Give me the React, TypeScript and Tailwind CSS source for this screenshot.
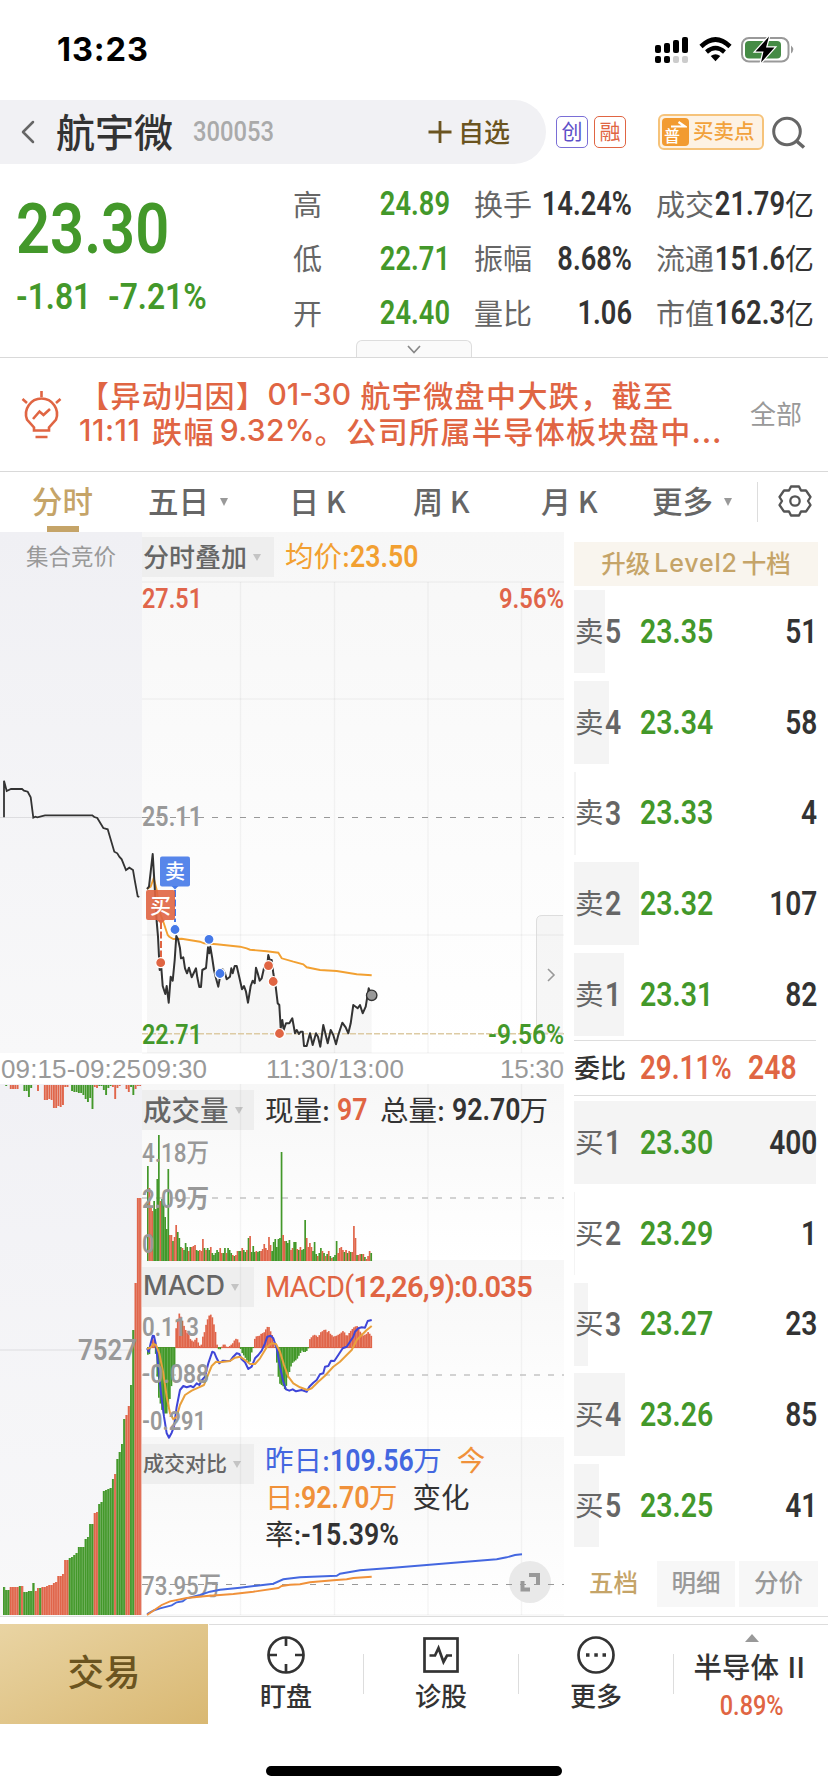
import React from 'react';
import { ChevronLeft } from 'lucide-react';

type Point = [number, number];

// Chart coordinates are stored at three units per pixel
const U = 3;

const auctionLine: Point[] = [
  [12, 232], [12, 122], [20, 153], [33, 147], [66, 147], [72, 152], [83, 155], [92, 172], [100, 233], [106, 230],
  [112, 232], [135, 226], [277, 226], [283, 231], [292, 234], [310, 264], [323, 268], [343, 335], [352, 340],
  [358, 350], [365, 358], [378, 390], [388, 383], [399, 390], [404, 420], [413, 469], [418, 471],
];

const priceLine: Point[] = [
  [441, 447], [447, 440], [458, 342], [463, 420], [470, 545], [474, 590], [479, 690], [484, 683], [488, 738],
  [496, 762], [500, 738], [506, 788], [512, 710], [518, 722], [524, 660], [529, 588], [534, 598], [540, 625],
  [543, 655], [550, 652], [555, 685], [561, 700], [567, 683], [575, 712], [588, 685], [592, 712], [598, 741],
  [603, 741], [607, 690], [618, 684], [624, 622], [628, 640], [631, 620], [636, 650], [642, 690], [648, 715],
  [655, 740], [661, 705], [668, 688], [675, 700], [680, 718], [690, 710], [694, 685], [698, 700], [704, 678],
  [710, 678], [718, 712], [726, 748], [732, 738], [738, 755], [744, 788], [752, 738], [758, 722], [764, 730],
  [768, 683], [773, 700], [779, 722], [785, 715], [793, 680], [800, 690], [805, 645], [810, 662], [815, 660],
  [820, 700], [827, 740], [833, 790], [838, 795], [842, 865], [847, 840], [851, 870], [858, 850], [868, 850],
  [877, 835], [885, 880], [890, 870], [897, 882], [902, 875], [908, 875], [912, 918], [920, 918], [930, 880],
  [938, 915], [948, 880], [954, 890], [961, 920], [970, 855], [976, 880], [983, 910], [992, 870], [1000, 885],
  [1008, 913], [1015, 885], [1027, 848], [1037, 862], [1045, 880], [1052, 850], [1060, 795], [1067, 800],
  [1073, 805], [1080, 795], [1088, 820], [1097, 800], [1106, 745], [1115, 765],
];

const averageLine: Point[] = [
  [441, 447], [452, 440], [461, 415], [470, 450], [480, 520], [490, 545], [503, 585], [508, 590], [520, 597],
  [545, 596], [600, 605], [612, 610], [650, 613], [720, 620], [740, 625], [750, 629], [800, 634], [835, 638],
  [845, 655], [880, 665], [910, 673], [920, 682], [960, 690], [1010, 693], [1070, 703], [1115, 706],
];

const difLine: Point[] = [
  [441, 55], [446, 65], [452, 40], [458, 17], [462, 18], [468, 45], [475, 110], [483, 190], [492, 260], [500, 310],
  [507, 323], [515, 308], [522, 290], [530, 230], [540, 180], [550, 168], [560, 172], [572, 168], [580, 172],
  [590, 160], [598, 165], [606, 150], [615, 140], [625, 100], [637, 65], [643, 68], [650, 85], [658, 100],
  [668, 92], [680, 93], [690, 93], [700, 80], [710, 70], [718, 72], [725, 88], [735, 97], [745, 117], [755, 110],
  [765, 85], [775, 75], [785, 62], [795, 40], [802, 20], [812, 17], [820, 25], [830, 55], [840, 110], [850, 155],
  [858, 178], [868, 182], [878, 178], [888, 184], [905, 180], [920, 185], [928, 170], [940, 158], [950, 150],
  [960, 133], [970, 130], [975, 110], [985, 108], [993, 92], [1003, 93], [1015, 75], [1028, 55], [1040, 50],
  [1050, 35], [1060, 20], [1065, 5], [1075, -5], [1085, -8], [1095, -7], [1103, -27], [1115, -30],
];

const deaLine: Point[] = [
  [441, 57], [452, 52], [460, 42], [468, 45], [478, 70], [490, 130], [500, 200], [510, 250], [520, 268], [530, 260],
  [540, 225], [555, 195], [575, 182], [595, 173], [612, 165], [622, 140], [635, 108], [648, 95], [660, 97],
  [690, 93], [705, 83], [720, 80], [735, 90], [750, 102], [765, 102], [780, 85], [800, 52], [815, 40], [828, 42],
  [840, 65], [852, 105], [865, 140], [880, 160], [900, 172], [922, 180], [935, 175], [955, 155], [975, 137],
  [1000, 110], [1020, 95], [1040, 75], [1055, 60], [1070, 30], [1085, 15], [1100, 0], [1115, -12],
];

const yesterdayLine: Point[] = [
  [441, 852], [460, 842], [480, 835], [515, 826], [530, 817], [548, 814], [560, 805], [600, 795], [630, 785],
  [660, 779], [720, 773], [770, 767], [820, 761], [850, 748], [900, 742], [1010, 737], [1020, 731], [1080, 721],
  [1180, 713], [1280, 705], [1380, 697], [1490, 688], [1520, 682], [1545, 675], [1566, 673],
];

const todayLine: Point[] = [
  [441, 855], [460, 842], [485, 825], [510, 814], [560, 804], [620, 798], [700, 792], [760, 785], [835, 774],
  [845, 768], [870, 764], [900, 763], [930, 757], [1000, 751], [1040, 748], [1060, 744], [1115, 740],
];

// MACD histogram, [x, signed height in px]
const macdBars: Point[] = [
  [441, -6], [446, -9], [451, -2], [455, 8], [460, 12], [465, 1], [470, -22], [475, -49], [480, -55], [485, -62],
  [490, -66], [500, -66], [505, -58], [510, -50], [515, -35], [520, -28], [526, -12], [528, 20], [533, 27],
  [538, 35], [543, 30], [548, 26], [553, 20], [560, 15], [566, 14], [571, 8], [580, 6], [590, 10], [595, 4],
  [602, 0], [607, 10], [612, 14], [617, 22], [622, 28], [627, 32], [632, 33], [637, 30], [642, 22], [647, 14],
  [651, 2], [657, -3], [662, -1], [668, 3], [675, 3], [681, 0], [690, 2], [700, 5], [705, 9], [715, 8], [720, 0],
  [725, -5], [735, -10], [745, -15], [750, -14], [755, -4], [760, 0], [765, 11], [780, 12], [785, 15], [790, 14],
  [800, 20], [805, 22], [810, 17], [815, 14], [820, 6], [825, 1], [830, -15], [835, -30], [840, -37], [848, -38],
  [853, -42], [858, -39], [863, -30], [870, -22], [875, -16], [882, -14], [890, -12], [900, -6], [905, -3],
  [912, -5], [918, -4], [924, -2], [928, 8], [938, 12], [945, 13], [955, 10], [960, 15], [970, 17], [975, 19],
  [980, 15], [985, 17], [990, 14], [1000, 11], [1010, 12], [1020, 14], [1030, 17], [1040, 11], [1050, 16],
  [1060, 20], [1070, 22], [1080, 16], [1090, 12], [1100, 14], [1105, 16], [1110, 13], [1118, 10],
];

// Minute volume: height in px, negative for falling minutes
const volumeBars = [
  -95, 73, 55, 50, -60, -52, -82, -126, 60, -62, -57, -44, -32, -92, 26, 26, -20, 24, 36, -29, -23, -14, 13, -11,
  -18, -14, 10, -14, 14, 15, 16, -11, -10, 11, 10, 22, -13, 11, -13, -11, 14, -8, -6, -8, -11, -9, 13, 8, -8, -13,
  8, -13, -11, -8, 6, -5, 6, 10, -10, -10, 13, -11, -9, 11, -23, 25, -9, -15, -9, 10, -9, -10, 10, 12, 17, 13,
  11, 24, 16, -10, -19, -22, -14, -22, -23, -109, 26, 20, -20, -18, -21, 11, 13, -19, -19, 12, -11, 14, -11, -12,
  -41, 23, 14, 18, 14, -10, -19, -7, 5, -8, -13, 10, -8, 5, -7, 10, -5, 3, -4, -6, -20, 8, 13, 14, 11, -9, 11, -8,
  10, -9, 9, 35, 23, -6, 6, 7, -7, 7, -4, 2, 5, 10, -8,
];

// Call auction, matched volume (grows from the bottom edge)
const matchedBars = [
  -28, -25, -25, 28, 28, 28, 28, -29, 29, -23, -23, -24, -24, -32, 24, 27, -27, 28, 28, 29, 30, 30, 32, 33, 39, 39,
  41, 55, 55, -57, -58, -60, -62, -68, -68, -68, -76, -78, -91, -91, 102, 103, -111, -113, -124, -125, -126, -127,
  -136, 141, -156, -163, -171, -196, 200, 209, -230, -285, 332, 417, 417,
];

// Call auction, unmatched volume (hangs from the top edge)
const unmatchedBars = [
  0, -1, 0, 4, 4, 4, 4, 0, 0, -6, -6, -12, -3, 0, 0, 6, 0, 0, 15, 15, 14, 15, 23, 23, 21, 22, 20, 2, 2, 0, -6, -7,
  -7, -8, -8, -10, -14, -17, -13, -24, 2, 3, -1, -1, -5, -10, -3, -1, 2, 14, 3, 1, 0, 0, 4, 7, -2, -10, 4, 1, 1,
];

const RED = '#e0654a';
const GREEN = '#43982a';

const toPath = (points: Point[], top: number) =>
  points.map(([x, y], i) => `${i ? 'L' : 'M'}${(x / U).toFixed(1)} ${(top + y / U).toFixed(1)}`).join('');

const valueAt = (points: Point[], x: number) => {
  const next = points.findIndex((p) => p[0] >= x);
  if (next <= 0) return points[0][1];
  const [x0, y0] = points[next - 1];
  const [x1, y1] = points[next];
  return y0 + ((y1 - y0) * (x - x0)) / (x1 - x0);
};

interface LabelProps {
  x: number;
  y: number;
  width: number;
  fill?: string;
  size?: number;
  weight?: number;
  children: React.ReactNode;
}

const AxisLabel = ({ x, y, width, fill = '#999', size = 28, weight = 600, children }: LabelProps) => (
  <text x={x} y={y} fill={fill} fontSize={size} fontWeight={weight} textLength={width} lengthAdjust="spacingAndGlyphs">
    {children}
  </text>
);

const Marker = ({ x, y, color }: { x: number; y: number; color: string }) => (
  <circle cx={x} cy={y} r="5" fill={color} stroke="#fff" strokeWidth="1.2" />
);

const ChartDrawing = () => (
  <svg
    className="absolute inset-0 font-[Roboto,'Noto_Sans_CJK_SC',sans-serif]"
    width="566"
    height="1084"
    viewBox="0 532 566 1084"
    fill="none"
  >
    {/* grid */}
    <g stroke="#000" strokeOpacity="0.04" strokeWidth="1.4">
      <path d="M142 582H564M142 699H564M142 935H564M142 1053H564" />
      <path d="M240.5 582V1053M334.5 582V1053M428 582V1053M521.5 582V1053" />
      <path d="M240.5 1084V1615M334.5 1084V1615M428 1084V1615M521.5 1084V1615" />
      <path d="M142 1615H564" />
    </g>
    <path d="M0 817.5H142M0 1350H142" stroke="#dddde0" />

    {/* price */}
    <path d={`${toPath(priceLine, 740)}L371.7 1053L147 1053Z`} fill="#000" fillOpacity="0.03" />
    <path d="M142 817.5H564" stroke="#999" strokeDasharray="6 8" />
    <path d="M142 1033.8H564" stroke="#ddcba4" strokeWidth="1.6" strokeDasharray="6 2" />
    <path d={toPath(auctionLine, 740)} stroke="#333" strokeWidth="1.8" />
    <path d={toPath(averageLine, 740)} stroke="#f2a031" strokeWidth="1.9" />
    <path d={toPath(priceLine, 740)} stroke="#333" strokeWidth="2" strokeLinejoin="round" />

    <AxisLabel x={142} y={608} width={60} fill={RED}>27.51</AxisLabel>
    <AxisLabel x={499} y={608} width={65} fill={RED}>9.56%</AxisLabel>
    <AxisLabel x={142} y={826} width={60}>25.11</AxisLabel>

    {/* drawer handle */}
    <path d="M563 915.5H542Q536.5 915.5 536.5 921V1028Q536.5 1033 542 1033H563" fill="#000" fillOpacity="0.03" stroke="#ddd" />
    <path d="M548 969l6 6-6 6" stroke="#999" strokeWidth="1.6" />

    <AxisLabel x={142} y={1044} width={60} fill={GREEN}>22.71</AxisLabel>
    <AxisLabel x={488} y={1044} width={76} fill={GREEN}>-9.56%</AxisLabel>

    {/* trade markers */}
    <path d="M175 890V922" stroke="#4579e8" strokeWidth="2" strokeDasharray="7 2.5" />
    <rect x="160" y="856.5" width="30" height="30" rx="2" fill="#4579e8" fillOpacity="0.9" />
    <path d="M171.5 886l3.5 3.5 3.5-3.5z" fill="#4579e8" />
    <path d="M161 922V958" stroke="#e06543" strokeWidth="2" strokeDasharray="7 2.5" />
    <rect x="146" y="890" width="29" height="30" rx="2" fill="#e06543" fillOpacity="0.9" />
    <path d="M157 920l4 4 4-4z" fill="#e06543" />
    <text x="175" y="879" fontSize="20" fill="#fff" textAnchor="middle" fontWeight="500">卖</text>
    <text x="160.5" y="912.5" fontSize="21" fill="#fff" textAnchor="middle" fontWeight="500">买</text>
    <Marker x={175} y={929.5} color="#4579e8" />
    <Marker x={209} y={939.3} color="#4579e8" />
    <Marker x={220} y={973.5} color="#4579e8" />
    <Marker x={160.7} y={962.7} color="#e06543" />
    <Marker x={268.5} y={965.7} color="#e06543" />
    <Marker x={273.2} y={981.5} color="#e06543" />
    <Marker x={279.5} y={1033.5} color="#e06543" />
    <circle cx="371.7" cy="995.3" r="5.2" fill="#999" stroke="#333" strokeWidth="1.4" />

    {/* call auction bars */}
    {unmatchedBars.map((h, i) => (
      <rect key={i} x={3 + i * 2.27} y={1085} width="1.9" height={Math.abs(h)} fill={h < 0 ? GREEN : RED} />
    ))}
    {matchedBars.map((h, i) => (
      <g key={i} fill={h < 0 ? GREEN : RED}>
        <rect x={3 + i * 2.27} y={1615 - Math.abs(h)} width="2.27" height={Math.abs(h)} fillOpacity="0.75" />
        <rect x={3 + i * 2.27} y={1615 - Math.abs(h)} width="1.5" height={Math.abs(h)} />
      </g>
    ))}
    <AxisLabel x={78} y={1360} width={59} size={30}>7527</AxisLabel>

    {/* volume */}
    <path d="M142 1198H564" stroke="#c4c4c4" strokeWidth="1.6" strokeDasharray="6 8" />
    {volumeBars.map((h, i) => (
      <rect key={i} x={147 + i * 1.573} y={1261 - Math.abs(h)} width="1.7" height={Math.abs(h)} fill={h < 0 ? GREEN : RED} />
    ))}
    <AxisLabel x={142} y={1161.5} width={67} size={26} weight={500}>4.18万</AxisLabel>
    <AxisLabel x={142} y={1208} width={67} size={26}>2.09万</AxisLabel>
    <AxisLabel x={142} y={1252.5} width={12.5} size={26}>0</AxisLabel>

    {/* macd */}
    <path d="M142 1375H564" stroke="#c4c4c4" strokeWidth="1.6" strokeDasharray="6 8" />
    <path d="M147 1347.5H372" stroke={RED} />
    {Array.from({ length: 143 }, (_, i) => {
      const x = 441 + i * 4.72;
      const v = valueAt(macdBars, x + 2);
      return (
        <rect
          key={i}
          x={x / U}
          y={v < 0 ? 1347 : 1347.6 - v}
          width="1.7"
          height={Math.abs(v) + 0.5}
          fill={v < 0.5 ? GREEN : RED}
        />
      );
    })}
    <path d={toPath(difLine, 1330)} stroke="#3e45d8" strokeWidth="2" strokeLinejoin="round" />
    <path d={toPath(deaLine, 1330)} stroke="#e9a03c" strokeWidth="2" strokeLinejoin="round" />
    <AxisLabel x={142} y={1336} width={57} size={26}>0.113</AxisLabel>
    <AxisLabel x={142} y={1383} width={67} size={26}>-0.088</AxisLabel>
    <AxisLabel x={142} y={1430} width={64} size={26}>-0.291</AxisLabel>

    {/* turnover comparison */}
    <circle cx="530" cy="1582" r="21" fill="#e9e9e9" />
    <path d="M142 1584.5H564" stroke="#999" strokeDasharray="6 8" />
    <path d="M529 1575H538V1584M530 1589.5H522.5V1581" stroke="#999" strokeWidth="4" />
    <AxisLabel x={142} y={1595} width={79} size={26} weight={500}>73.95万</AxisLabel>
    <path d={toPath(yesterdayLine, 1330)} stroke="#4467e0" strokeWidth="1.9" />
    <path d={toPath(todayLine, 1330)} stroke="#f0913a" strokeWidth="1.9" />

    {/* time axis */}
    <g fill="#999" fontSize="26" className="font-['Liberation_Sans',Arial,sans-serif]">
      <text x="1" y="1078" textLength="140">09:15-09:25</text>
      <text x="142" y="1078" textLength="65">09:30</text>
      <text x="266" y="1078" textLength="138">11:30/13:00</text>
      <text x="500" y="1078" textLength="64">15:30</text>
    </g>
  </svg>
);

const Num = ({ className = '', children }: { className?: string; children: React.ReactNode }) => (
  <span className={`inline-block font-[Roboto] font-semibold whitespace-nowrap ${className}`}>{children}</span>
);

const StatusBar = () => (
  <div className="flex h-[100px] items-center justify-between pr-[33px] pl-[57px]">
    <span className="font-[Inter] text-[32.500px] leading-none font-bold tracking-[.9px] text-black">13:23</span>
    <svg width="142" height="28" viewBox="653 36 142 28" fill="none">
      <g fill="#000">
        <rect x="655" y="45" width="6" height="8" rx="2" />
        <rect x="664" y="43" width="6" height="10" rx="2" />
        <rect x="673" y="40" width="6" height="13" rx="2" />
        <rect x="682" y="37" width="6" height="16" rx="2" />
        <rect x="655" y="56" width="6" height="7" rx="2" />
        <rect x="664" y="56" width="6" height="7" rx="2" />
      </g>
      <rect x="673" y="56" width="6" height="7" rx="2" fill="#ccc" />
      <rect x="682" y="56" width="6" height="7" rx="2" fill="#ccc" />
      <path d="M701 46.500Q715.500 32.500 730 46.500" stroke="#000" strokeWidth="4.600" />
      <path d="M706.500 52Q715.500 44 724.500 52" stroke="#000" strokeWidth="4.400" />
      <path d="M710.700 56Q715.500 52.500 720.300 56L715.500 61.200Z" fill="#000" />
      <rect x="742" y="38" width="46.500" height="23.500" rx="7" stroke="#999" strokeWidth="2" />
      <rect x="745" y="41" width="36" height="17.500" rx="4" fill="#458b45" />
      <path d="M791 45.500Q795.500 49.500 791 53.500Z" fill="#999" />
      <path d="M769 36.500L755.500 51.500H763.500L761 62.500L774.500 47.500H766Z" fill="#000" stroke="#fff" strokeWidth="2.500" paintOrder="stroke" />
    </svg>
  </div>
);

const Header = () => (
  <header className="flex h-[64px] items-center">
    <div className="flex h-full w-[546px] items-center rounded-r-[32px] bg-[#f1f1f4]">
      <ChevronLeft className="ml-[8px] h-[40px] w-[40px] text-[#666]" strokeWidth={1.5} />
      <h1 className="-mt-[3px] ml-[8px] text-[39px] font-medium text-[#333]">航宇微</h1>
      <span className="ml-[20px] origin-left scale-x-[.88] font-[Roboto] text-[27px] font-medium text-[#aaa]">300053</span>
      <svg className="-mr-[1px] ml-auto" width="24" height="24" viewBox="0 0 24 24" stroke="#6b5420" strokeWidth="2.800">
        <path d="M12 1V23M.5 12H23.500" />
      </svg>
      <span className="-mt-[3px] mr-[36px] ml-[7px] text-[26px] font-medium text-[#6b5420]">自选</span>
    </div>
    <span className="ml-[10px] flex h-[32px] w-[32px] items-center justify-center rounded-[5px] border-[1.500px] border-[#7a6ed6] pb-[2px] text-[21px] text-[#5d4fc8]">创</span>
    <span className="ml-[6px] flex h-[32px] w-[32px] items-center justify-center rounded-[5px] border-[1.500px] border-[#e06543] pb-[2px] text-[21px] text-[#e06543]">融</span>
    <div className="ml-[32px] flex h-[36px] w-[106px] items-center rounded-[6px] border-[2px] border-[#f6c37a] bg-[#fdf2e4] pl-[2px]">
      <span className="relative h-[28px] w-[27px] rounded-[4px] bg-[#f29b31] pt-[9px] pl-[2px] text-[16px] leading-[16px] font-medium text-white">
        普
        <svg className="absolute top-[3px] left-[9px]" width="16" height="7" viewBox="0 0 16 7" fill="none" stroke="#fff" strokeWidth="2.200">
          <path d="M0 5.500H14L7.500 1" />
        </svg>
      </span>
      <span className="-mt-[3px] ml-[4px] text-[20.500px] font-medium text-[#f2a23c]">买卖点</span>
    </div>
    <svg className="ml-[8px]" width="34" height="33" viewBox="0 0 34 33" fill="none" stroke="#666" strokeWidth="3">
      <circle cx="15" cy="15.500" r="13.300" />
      <path d="M24.500 25L32 31.500" strokeWidth="3.600" />
    </svg>
  </header>
);

const stats = [
  { label: '高', value: '24.89', label2: '换手', value2: '14.24%', label3: '成交', value3: '21.79' },
  { label: '低', value: '22.71', label2: '振幅', value2: '8.68%', label3: '流通', value3: '151.6' },
  { label: '开', value: '24.40', label2: '量比', value2: '1.06', label3: '市值', value3: '162.3' },
];

const Quote = () => (
  <section className="relative flex h-[194px] border-b border-[#d9d9d9]">
    <div className="w-[293px] pl-[16px] text-[#43982a]">
      <Num className="mt-[29px] block! origin-left scale-x-[.84] text-[71px] leading-[72px]">23.30</Num>
      <div className="mt-[12px] flex text-[37px] leading-[40px]">
        <Num className="w-[92px] origin-left scale-x-[.86]">-1.81</Num>
        <Num className="origin-left scale-x-[.86]">-7.21%</Num>
      </div>
    </div>
    <div className="mt-[13px]">
      {stats.map((row) => (
        <div key={row.label} className="flex h-[54.500px] items-center text-[29px] leading-none text-[#666]">
          <span className="-mt-[2px]">{row.label}</span>
          <Num className="w-[128px] origin-right scale-x-[.84] text-right text-[32.500px] text-[#43982a]">{row.value}</Num>
          <span className="-mt-[2px] ml-[24px]">{row.label2}</span>
          <Num className="-ml-[20px] w-[120px] origin-right scale-x-[.84] text-right text-[32.500px] text-[#333]">{row.value2}</Num>
          <span className="-mt-[2px] ml-[24px]">{row.label3}</span>
          <Num className="-ml-[15px] w-[86px] origin-right scale-x-[.84] text-right text-[32.500px] text-[#333]">{row.value3}</Num>
          <span className="-mt-[2px] text-[#333]">亿</span>
        </div>
      ))}
    </div>
    <div className="absolute bottom-0 left-[356px] flex h-[17px] w-[116px] items-center justify-center rounded-t-[6px] border border-b-0 border-[#ddd] bg-[#fafafa]">
      <svg width="14" height="9" viewBox="0 0 14 9" fill="none" stroke="#888" strokeWidth="1.700">
        <path d="M1 1L7 7.500L13 1" />
      </svg>
    </div>
  </section>
);

const News = () => (
  <section className="flex h-[114px] items-center border-b border-[#d9d9d9]">
    <svg className="ml-[21px]" width="41" height="50" viewBox="0 0 41 50" fill="none" stroke="#e06543" strokeWidth="2.600">
      <path d="M13 40.500V37.500L6 29.500A15.500 15.500 0 1 1 35 29.500L28 37.500V40.500Z" />
      <path d="M14.500 47H26.500M20.500 1V7M1.500 9L6 13M39.500 9L35 13" />
      <path d="M12 29L18.500 21.500L22.500 25L29 19" />
    </svg>
    <div className="-mt-[5px] ml-[17px] w-[660px] text-[30px] leading-[36px] font-medium tracking-[1.400px] whitespace-nowrap text-[#e06543]">
      <div className="flex">
        【异动归因】<span className="w-[93px] font-[Inter] tracking-normal">01-30</span>航宇微盘中大跌，截至
      </div>
      <div className="flex">
        <span className="w-[73px] font-[Inter] tracking-[.5px]">11:11</span>跌幅
        <span className="ml-[5px] font-[Inter] tracking-[.3px]">9.32%</span>。公司所属半导体板块盘中...
      </div>
    </div>
    <span className="-mt-[5px] ml-[11px] text-[26px] text-[#999]">全部</span>
  </section>
);

const Caret = ({ className = 'h-[9px] w-[9px]' }: { className?: string }) => (
  <svg className={className} viewBox="0 0 9 9" preserveAspectRatio="none" fill="currentColor">
    <path d="M0 0H9L4.500 9Z" />
  </svg>
);

const PeriodTabs = () => (
  <nav className="flex h-[60px] items-center pb-[4px] text-[30.500px] leading-[44px] font-medium text-[#666]">
    <div className="relative ml-[32px] w-[116px] text-[#c5a468]">
      分时
      <div className="absolute -bottom-[10px] left-[15px] h-[6px] w-[32px] bg-[#c5a468]" />
    </div>
    <div className="flex w-[141px] items-center">
      五日<Caret className="mt-[4px] ml-[11px] h-[8px] w-[8px] text-[#999]" />
    </div>
    <div className="w-[124px] text-[30px]">日 K</div>
    <div className="w-[128px] text-[30px]">周 K</div>
    <div className="w-[111px] text-[30px]">月 K</div>
    <div className="flex w-[105px] items-center">
      更多<Caret className="mt-[4px] ml-[11px] h-[8px] w-[8px] text-[#999]" />
    </div>
    <div className="mt-[4px] h-[40px] w-px bg-[#ddd]" />
    <svg className="mt-[2px] ml-[20px]" width="34" height="32" viewBox="0 0 34 32" fill="none" stroke="#555" strokeWidth="2.300">
      <path
        d="M13 1.500H21L23 5.500L28 5.500L32.500 12L30 16L32.500 20L28 26.500L23 26.500L21 30.500H13L11 26.500L6 26.500L1.500 20L4 16L1.500 12L6 5.500L11 5.500Z"
        strokeLinejoin="round"
      />
      <circle cx="17" cy="16" r="4.700" />
    </svg>
  </nav>
);

const IndicatorBox = ({ className = '', children }: { className?: string; children: React.ReactNode }) => (
  <div className={`flex h-[40px] shrink-0 items-center bg-[#eee] pb-[3px] pl-px font-medium whitespace-nowrap text-[#666] ${className}`}>
    {children}
    <Caret className="mt-[4px] ml-[6px] h-[7px] w-[8px] text-[#c4c4c4]" />
  </div>
);

const Chart = () => (
  <div className="relative flex h-[1084px] w-[564px]">
    <div className="w-[142px]">
      <div className="h-[521px] bg-linear-to-b from-[#f0f0f4] to-[#f8f8f9] pt-[11px] text-center text-[22.500px] leading-[24px] text-[#999]">
        集合竞价
      </div>
      <div className="mt-[31px] h-[532px] bg-linear-to-b from-[#f1f1f5] to-[#f8f8f9]" />
    </div>
    <div className="w-[422px]">
      <div className="h-[521px] bg-linear-to-b from-[#f7f7f7] to-white pt-[5px]">
        <div className="flex items-center">
          <IndicatorBox className="w-[132px] text-[26px]">分时叠加</IndicatorBox>
          <span className="-mt-[3px] ml-[11px] text-[28.500px] leading-[40px] text-[#f2a031]">
            均价:<Num className="origin-left scale-x-[.86] text-[31px] leading-[40px]">23.50</Num>
          </span>
        </div>
      </div>
      <div className="mt-[31px] h-[176px] bg-linear-to-b from-[#f7f7f7] to-white pt-[6px]">
        <div className="flex items-center text-[28.500px] leading-[40px] text-[#333]">
          <IndicatorBox className="w-[112px] text-[28.500px]">成交量</IndicatorBox>
          <span className="-mt-[3px] ml-[11px]">现量:</span>
          <Num className="ml-[7px] w-[43px] origin-left scale-x-[.86] text-[31px] text-[#e06543]">97</Num>
          <span className="-mt-[3px]">总量:</span>
          <Num className="-mr-[12px] ml-[7px] origin-left scale-x-[.86] text-[31px]">92.70</Num>
          <span className="-mt-[3px]">万</span>
        </div>
      </div>
      <div className="h-[177px] bg-linear-to-b from-[#f7f7f7] to-white pt-[7px]">
        <div className="flex items-center leading-[40px] text-[#e06543]">
          <IndicatorBox className="w-[112px]">
            <span className="font-[Inter] text-[27px]">MACD</span>
          </IndicatorBox>
          <span className="ml-[11px] font-[Roboto] text-[29px] tracking-[-.75px]">
            MACD(<span className="font-semibold">12,26,9):0.035</span>
          </span>
        </div>
      </div>
      <div className="flex h-[179px] bg-linear-to-b from-[#f7f7f7] to-white pt-[7px]">
        <IndicatorBox className="w-[112px] text-[21px]">成交对比</IndicatorBox>
        <div className="-mt-[3px] ml-[11px] text-[28.500px] leading-[35.500px] whitespace-nowrap text-[#333]">
          <div className="text-[#4467e0]">
            昨日:<Num className="-mr-[14px] origin-left scale-x-[.86] text-[31px] leading-[35px]">109.56</Num>万
            <span className="ml-[15px] text-[#f0913a]">今</span>
          </div>
          <div>
            <span className="text-[#f0913a]">
              日:<Num className="-mr-[12px] origin-left scale-x-[.86] text-[31px] leading-[35px]">92.70</Num>万
            </span>
            <span className="ml-[15px]">变化</span>
          </div>
          <div>
            率:<Num className="origin-left scale-x-[.86] text-[31px] leading-[35px]">-15.39%</Num>
          </div>
        </div>
      </div>
    </div>
    <ChartDrawing />
  </div>
);

const asks = [
  { side: '卖', level: 5, price: '23.35', volume: 51, bar: 31 },
  { side: '卖', level: 4, price: '23.34', volume: 58, bar: 35 },
  { side: '卖', level: 3, price: '23.33', volume: 4, bar: 2 },
  { side: '卖', level: 2, price: '23.32', volume: 107, bar: 65 },
  { side: '卖', level: 1, price: '23.31', volume: 82, bar: 50 },
];

const bids = [
  { side: '买', level: 1, price: '23.30', volume: 400, bar: 242 },
  { side: '买', level: 2, price: '23.29', volume: 1, bar: 1 },
  { side: '买', level: 3, price: '23.27', volume: 23, bar: 14 },
  { side: '买', level: 4, price: '23.26', volume: 85, bar: 51 },
  { side: '买', level: 5, price: '23.25', volume: 41, bar: 25 },
];

const OrderRow = ({ row }: { row: (typeof asks)[number] }) => (
  <div className="relative mb-[7.800px] flex h-[83px] items-center">
    <div className="absolute inset-y-0 left-0 bg-[#f4f4f4]" style={{ width: row.bar }} />
    <div className="relative flex w-[243px] items-center text-[28.500px] leading-none text-[#666]">
      <span className="-mt-[3px] ml-[1px]">{row.side}</span>
      <Num className="ml-[1px] w-[35.500px] origin-left scale-x-[.86] text-[33px]">{row.level}</Num>
      <Num className="origin-left scale-x-[.85] text-[33.500px] text-[#43982a]">{row.price}</Num>
      <Num className="ml-auto origin-right scale-x-[.84] text-[33.500px] text-[#333]">{row.volume}</Num>
    </div>
  </div>
);

const OrderBook = () => (
  <aside className="ml-[10px] w-[244px] pt-[10px]">
    <div className="mb-[4px] flex h-[44px] items-center justify-center gap-[4px] bg-[#f9f5ee] pb-[2px] text-[24.500px] font-medium text-[#c5a468]">
      <span>升级</span>
      <span className="pt-[2px] font-[Inter] text-[25px] tracking-[.8px]">Level2</span>
      <span>十档</span>
    </div>
    {asks.map((row) => (
      <OrderRow key={row.level} row={row} />
    ))}
    <div className="-mt-[4px] mb-[5px] flex h-[56px] w-[242px] items-center border-y border-[#ddd] text-[26px] font-medium text-[#333]">
      <span className="-mt-[3px]">委比</span>
      <Num className="ml-[14px] w-[108px] origin-left scale-x-[.84] text-[33px] text-[#e06543]">29.11%</Num>
      <Num className="origin-left scale-x-[.86] text-[33px] text-[#e06543]">248</Num>
    </div>
    {bids.map((row) => (
      <OrderRow key={row.level} row={row} />
    ))}
    <div className="mt-[14px] flex h-[46px] text-[24.500px] font-medium">
      <div className="flex w-[79px] items-center justify-center pb-[3px] text-[#c5a468]">五档</div>
      <div className="ml-[4px] flex w-[78px] items-center justify-center bg-[#f7f7f7] pb-[3px] text-[#999]">明细</div>
      <div className="ml-[4px] flex w-[79px] items-center justify-center bg-[#f7f7f7] pb-[3px] text-[#999]">分价</div>
    </div>
  </aside>
);

const actions = [
  {
    label: '盯盘',
    icon: (
      <>
        <circle cx="19" cy="19" r="17.500" />
        <path d="M19 1.500V10M19 28V36.500M1.500 19H10M28 19H36.500" />
      </>
    ),
  },
  {
    label: '诊股',
    icon: (
      <>
        <rect x="2.500" y="2.500" width="33" height="33" />
        <path d="M7.500 19.500H13L16.500 12L21.500 26L25 19.500H30" />
      </>
    ),
  },
  {
    label: '更多',
    icon: (
      <>
        <circle cx="19" cy="19" r="17.500" />
        <path d="M9 19h3.500M17.300 19h3.500M25.500 19h3.500" strokeWidth="3.500" />
      </>
    ),
  },
];

const BottomBar = () => (
  <footer className="mt-[7px] flex h-[100px] border-t border-[#ddd]">
    <button className="-mt-px h-[100px] w-[209px] border-r border-white bg-linear-to-br from-[#e9d4a3] to-[#d9b872] pb-[6px] text-[36.500px] font-medium text-[#6b5420]">
      交易
    </button>
    {actions.map((action) => (
      <div key={action.label} className="flex w-[155px]">
        <div className="flex grow flex-col items-center text-[26px] leading-[36px] font-medium text-[#333]">
          <svg className="mt-[11px] mb-[3px]" width="38" height="38" viewBox="0 0 38 38" fill="none" stroke="#333" strokeWidth="2.700">
            {action.icon}
          </svg>
          {action.label}
        </div>
        <div className="mt-[29px] h-[40px] w-px bg-[#ddd]" />
      </div>
    ))}
    <div className="flex grow flex-col items-center pl-[2px]">
      <Caret className="mt-[9px] h-[8px] w-[14px] rotate-180 text-[#999]" />
      <span className="mt-[4px] text-[28.500px] leading-[40px] font-medium whitespace-nowrap text-[#333]">
        半导体<span className="ml-[3px]">Ⅱ</span>
      </span>
      <Num className="mt-[2px] scale-x-[.87] text-[27px] leading-[36px] font-medium! text-[#e06543]">0.89%</Num>
    </div>
  </footer>
);

export default function App() {
  return (
    <div className="h-[1792px] w-[828px] overflow-hidden bg-white font-['Noto_Sans_CJK_SC',sans-serif]">
      <StatusBar />
      <Header />
      <Quote />
      <News />
      <PeriodTabs />
      <div className="flex h-[1085px] border-b border-[#ddd]">
        <Chart />
        <OrderBook />
      </div>
      <BottomBar />
      <div className="mx-auto mt-[42px] h-[10px] w-[296px] rounded-full bg-black" />
    </div>
  );
}
